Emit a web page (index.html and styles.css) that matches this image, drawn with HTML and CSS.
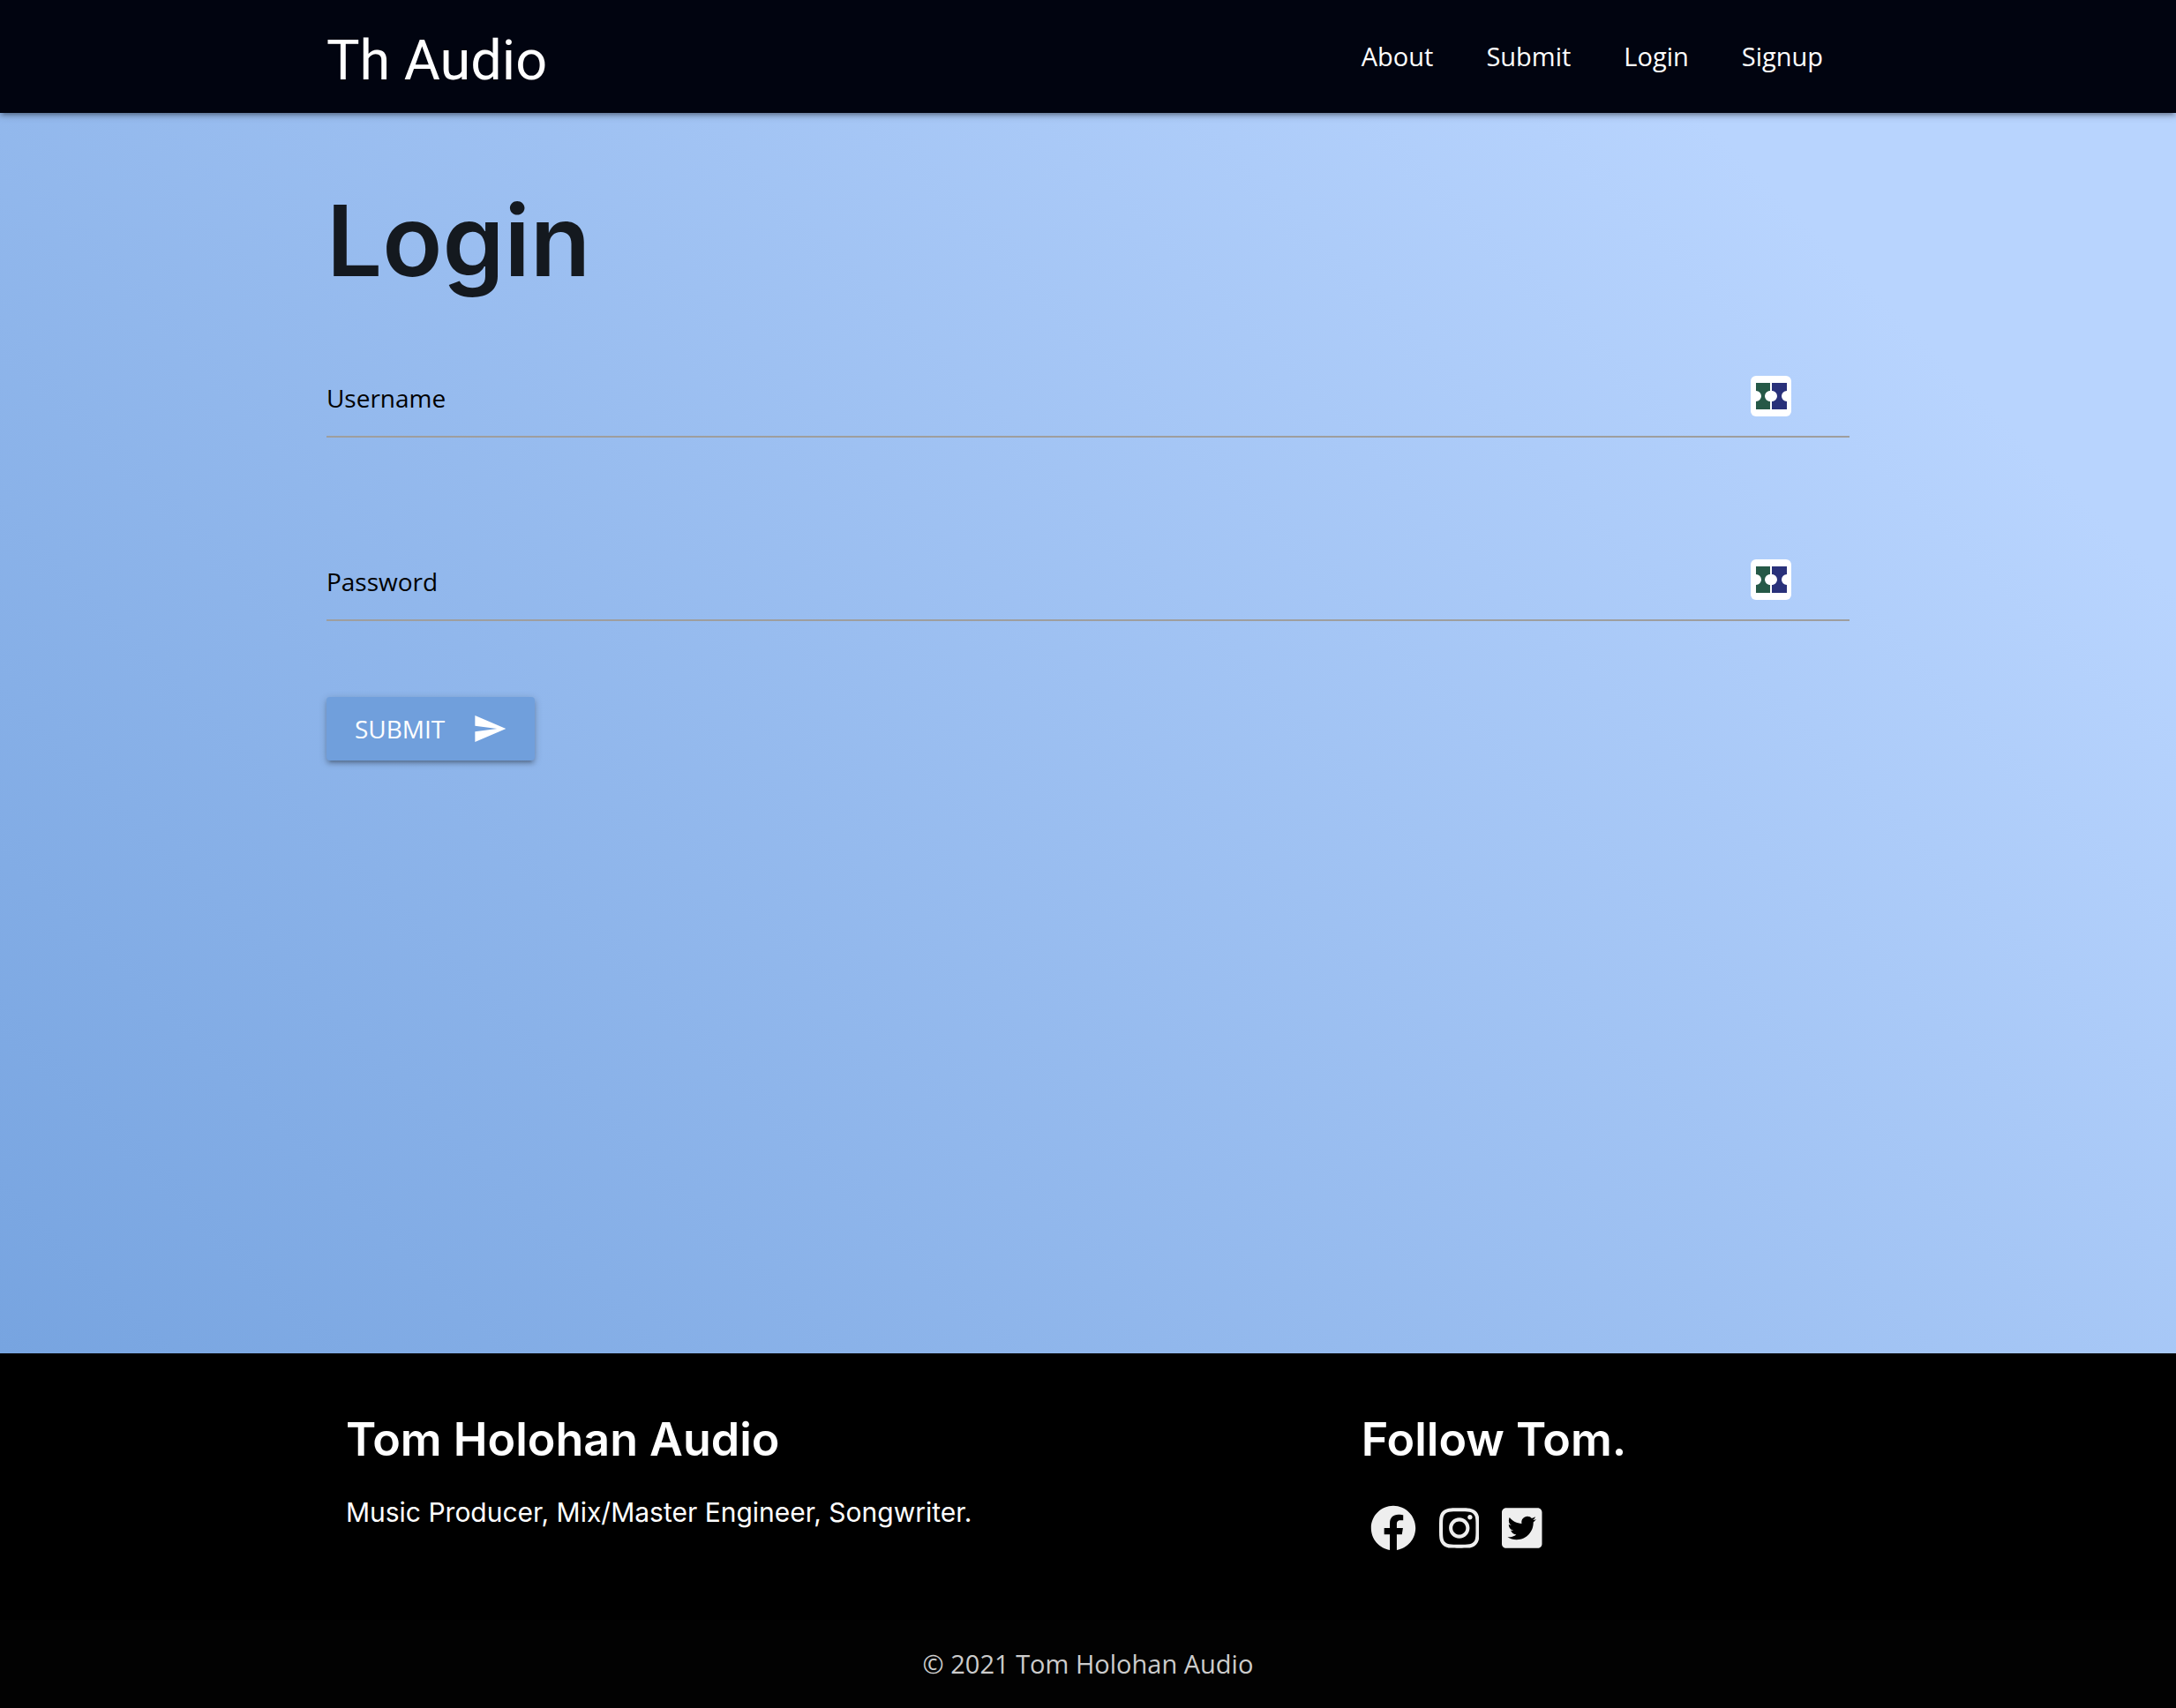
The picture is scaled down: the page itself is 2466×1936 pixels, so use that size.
FILE: index.html
```html
<!DOCTYPE html>
<html lang="en">
<head>
<meta charset="utf-8">
<meta name="viewport" content="width=device-width, initial-scale=1">
<title>Th Audio - Login</title>
<link rel="stylesheet" href="styles.css">
</head>
<body>
<header class="nav">
  <nav class="container nav-row">
    <a class="brand" href="#">Th Audio</a>
    <ul class="nav-links">
      <li><a href="#">About</a></li>
      <li><a href="#">Submit</a></li>
      <li><a href="#">Login</a></li>
      <li><a href="#">Signup</a></li>
    </ul>
  </nav>
</header>

<main class="page">
  <div class="container">
    <h1 class="title">Login</h1>
    <form class="form">
      <div class="field">
        <input class="field-input" id="username" type="text" autocomplete="username">
        <label class="field-label" for="username">Username</label>
        <button class="vault" type="button" aria-label="Fill username">
          <svg viewBox="0 0 46 46" aria-hidden="true">
            <path fill="#265947" d="M6 8h16v9a6 6 0 0 0 0 12v9H6v-9a6 6 0 0 0 0-12z"/>
            <path fill="#29317a" d="M24 8h17v9a6 6 0 0 0 0 12v9H24v-9a6 6 0 0 0 0-12z"/>
            <circle cx="23" cy="23" r="6" fill="#fff"/>
          </svg>
        </button>
      </div>
      <div class="field">
        <input class="field-input" id="password" type="password" autocomplete="current-password">
        <label class="field-label" for="password">Password</label>
        <button class="vault" type="button" aria-label="Fill password">
          <svg viewBox="0 0 46 46" aria-hidden="true">
            <path fill="#265947" d="M6 8h16v9a6 6 0 0 0 0 12v9H6v-9a6 6 0 0 0 0-12z"/>
            <path fill="#29317a" d="M24 8h17v9a6 6 0 0 0 0 12v9H24v-9a6 6 0 0 0 0-12z"/>
            <circle cx="23" cy="23" r="6" fill="#fff"/>
          </svg>
        </button>
      </div>
      <button class="submit" type="submit">
        <span>SUBMIT</span>
        <svg class="send" viewBox="0 0 24 24" aria-hidden="true"><path fill="currentColor" d="M2.01 21L23 12 2.01 3 2 10l15 2-15 2z"/></svg>
      </button>
    </form>
  </div>
</main>

<footer class="footer">
  <div class="container footer-row">
    <section class="footer-col">
      <h2 class="footer-title">Tom Holohan Audio</h2>
      <p class="footer-text">Music Producer, Mix/Master Engineer, Songwriter.</p>
    </section>
    <section class="footer-col">
      <h2 class="footer-title">Follow Tom.</h2>
      <div class="social">
        <a href="#" aria-label="Facebook"><svg viewBox="0 0 512 512"><path fill="currentColor" d="M504 256C504 119 393 8 256 8S8 119 8 256c0 123.78 90.69 226.38 209.25 245V327.69h-63V256h63v-54.64c0-62.15 37-96.48 93.67-96.48 27.14 0 55.52 4.84 55.52 4.84v61h-31.28c-30.8 0-40.41 19.12-40.41 38.73V256h68.78l-11 71.69h-57.78V501C413.31 482.38 504 379.78 504 256z"/></svg></a>
        <a href="#" aria-label="Instagram"><svg viewBox="0 0 448 512"><path fill="currentColor" d="M224.1 141c-63.6 0-114.9 51.3-114.9 114.9s51.3 114.9 114.9 114.9S339 319.5 339 255.9 287.7 141 224.1 141zm0 189.6c-41.1 0-74.7-33.5-74.7-74.7s33.5-74.7 74.7-74.7 74.7 33.5 74.7 74.7-33.6 74.7-74.7 74.7zm146.4-194.3c0 14.9-12 26.8-26.8 26.8-14.9 0-26.8-12-26.8-26.8s12-26.8 26.8-26.8 26.8 12 26.8 26.8zm76.1 27.2c-1.7-35.9-9.9-67.7-36.2-93.9-26.2-26.2-58-34.4-93.9-36.2-37-2.1-147.9-2.1-184.9 0-35.8 1.7-67.6 9.9-93.9 36.1s-34.4 58-36.2 93.9c-2.1 37-2.1 147.9 0 184.9 1.7 35.9 9.9 67.7 36.2 93.9s58 34.4 93.9 36.2c37 2.1 147.9 2.1 184.9 0 35.9-1.7 67.7-9.9 93.9-36.2 26.2-26.2 34.4-58 36.2-93.9 2.1-37 2.1-147.8 0-184.8zM398.8 388c-7.8 19.6-22.9 34.7-42.6 42.6-29.5 11.7-99.5 9-132.1 9s-102.7 2.6-132.1-9c-19.6-7.8-34.7-22.9-42.6-42.6-11.7-29.5-9-99.5-9-132.1s-2.6-102.7 9-132.1c7.8-19.6 22.9-34.7 42.6-42.6 29.5-11.7 99.5-9 132.1-9s102.7-2.6 132.1 9c19.6 7.8 34.7 22.9 42.6 42.6 11.7 29.5 9 99.5 9 132.1s2.7 102.7-9 132.1z"/></svg></a>
        <a href="#" aria-label="Twitter"><svg viewBox="0 0 448 512"><path fill="currentColor" d="M400 32H48C21.500 32 0 53.500 0 80v352c0 26.500 21.500 48 48 48h352c26.500 0 48-21.500 48-48V80c0-26.500-21.500-48-48-48zm-48.900 158.800c.2 2.800.2 5.700.2 8.500 0 86.700-66 186.600-186.600 186.600-37.200 0-71.700-10.800-100.700-29.400 5.300.6 10.400.8 15.800.8 30.700 0 58.900-10.400 81.400-28-28.800-.6-53-19.500-61.300-45.500 10.100 1.500 19.200 1.500 29.600-1.200-30-6.100-52.500-32.500-52.500-64.400v-.8c8.700 4.900 18.900 7.900 29.600 8.300a65.447 65.447 0 0 1-29.200-54.600c0-12.200 3.200-23.400 8.900-33.100 32.300 39.800 80.800 65.800 135.200 68.600-9.300-44.500 24-80.600 64-80.600 18.900 0 35.900 7.900 47.900 20.700 14.800-2.800 29-8.300 41.600-15.800-4.900 15.200-15.200 28-28.800 36.100 13.200-1.400 26-5.100 37.800-10.200-8.900 13.100-20.100 24.700-32.900 34z"/></svg></a>
      </div>
    </section>
  </div>
  <div class="copyright">© 2021 Tom Holohan Audio</div>
</footer>
</body>
</html>
```
FILE: styles.css
```css
* {
  box-sizing: border-box;
}

body {
  margin: 0;
  min-height: 100vh;
  display: flex;
  flex-direction: column;
  font-family: "Open Sans", "Noto Sans", sans-serif;
  font-size: 29px;
  line-height: 44px;
}

a {
  color: inherit;
  text-decoration: none;
}

svg {
  display: block;
}

.container {
  width: 70%;
  margin: 0 auto;
}

/* Top bar */
.nav {
  position: relative;
  background: #010410;
  color: #fff;
  box-shadow: 0 4px 4px rgba(0, 0, 0, 0.14), 0 6px 2px -4px rgba(0, 0, 0, 0.12), 0 2px 10px rgba(0, 0, 0, 0.2);
}

.nav-row {
  display: flex;
  align-items: center;
  justify-content: space-between;
  height: 128px;
}

.brand {
  font-family: Roboto, sans-serif;
  font-size: 63px;
  line-height: 72px;
  padding-top: 10px;
}

.nav-links {
  display: flex;
  margin: 0;
  padding: 0;
  list-style: none;
}

.nav-links a {
  display: block;
  padding: 0 30px;
}

/* Login form */
.page {
  flex: 1;
  background: linear-gradient(45deg, #77a4e0 0%, #b8d4fe 86%);
}

.title {
  margin: 0;
  padding-top: 84px;
  font-family: Inter, sans-serif;
  font-size: 112px;
  font-weight: 600;
  line-height: 120px;
  color: #14191f;
}

.form {
  display: flex;
  flex-direction: column;
  align-items: flex-start;
  padding: 74px 0 80px;
}

.field {
  display: grid;
  width: 100%;
  margin-bottom: 118px;
}

.field > * {
  grid-area: 1 / 1;
}

.field-input {
  width: 100%;
  height: 90px;
  padding: 0;
  border: 0;
  border-bottom: 2px solid #9e9e9e;
  background: transparent;
  font: inherit;
  outline: none;
}

.field-label {
  align-self: center;
  justify-self: start;
  font-size: 28px;
  color: #000;
}

.vault {
  align-self: end;
  justify-self: end;
  width: 46px;
  height: 46px;
  margin: 0 66px 24px 0;
  padding: 0;
  border: 0;
  border-radius: 6px;
  background: #fff;
}

.submit {
  display: flex;
  align-items: center;
  gap: 31px;
  height: 72px;
  margin-top: -32px;
  padding: 0 31px 0 32px;
  border: 0;
  border-radius: 4px;
  background: #709fdc;
  color: #fff;
  font: inherit;
  font-size: 28px;
  box-shadow: 0 4px 4px rgba(0, 0, 0, 0.14), 0 6px 2px -4px rgba(0, 0, 0, 0.12), 0 2px 10px rgba(0, 0, 0, 0.2);
}

.send {
  width: 40px;
  height: 40px;
}

/* Footer */
.footer {
  background: #000;
  color: #fff;
}

.footer-row {
  display: grid;
  grid-template-columns: 2fr 1fr;
  min-height: 302px;
  padding-top: 70px;
}

.footer-col {
  padding: 0 22px;
}

.footer-title {
  margin: 0;
  font-family: Inter, sans-serif;
  font-size: 52px;
  font-weight: 600;
  line-height: 56px;
}

.footer-text {
  margin: 32px 0 0;
  font-family: Inter, sans-serif;
  font-size: 30px;
}

.social {
  display: flex;
  gap: 26px;
  padding: 46px 10px 0;
  color: #eee;
}

.social svg {
  height: 52px;
}

.copyright {
  padding: 28px 0;
  background: #020202;
  color: #ccc;
  text-align: center;
}
```
